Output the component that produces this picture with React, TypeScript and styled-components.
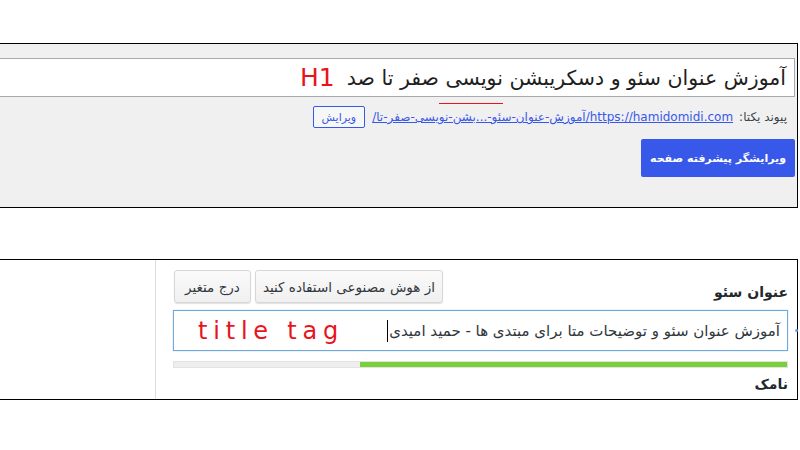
import React from 'react';
import styled, { createGlobalStyle } from 'styled-components';

const GlobalStyle = createGlobalStyle`
  html, body {
    margin: 0;
    padding: 0;
    background: #fff;
  }
  body {
    font-family: "DejaVu Sans", "Noto Sans", sans-serif;
    color: #1e1e1e;
  }
`;

const Page = styled.div`
  width: 800px;
  height: 450px;
  padding-top: 43px;
  box-sizing: border-box;
  overflow: hidden;
  direction: rtl;
`;

const TopPanel = styled.section`
  margin-right: 2px;
  height: 165px;
  box-sizing: border-box;
  border: 1px solid #000;
  border-left: none;
  background: #f0f0f1;
  padding: 14px 2px 0 0;
  display: flex;
  flex-direction: column;
`;

const TitleBox = styled.div`
  height: 39px;
  box-sizing: border-box;
  border: 1px solid #a7aaad;
  border-left: none;
  background: #fff;
  display: flex;
  align-items: center;
  gap: 12px;
  padding-right: 8px;
`;

const TitleText = styled.span`
  font-size: 20.5px;
  color: #1e1e1e;
  white-space: nowrap;
`;

const RedNote = styled.span<{ $size: number; $spacing?: number }>`
  color: #e8141b;
  font-family: "DejaVu Sans", sans-serif;
  font-size: ${({ $size }) => $size}px;
  letter-spacing: ${({ $spacing = 0 }) => $spacing}px;
  direction: ltr;
  white-space: nowrap;
`;

const PermalinkRow = styled.div`
  position: relative;
  display: flex;
  align-items: center;
  gap: 6px;
  margin-top: 9px;
  padding-right: 8px;
  font-size: 12px;
  height: 22px;
`;

const Label = styled.span`
  color: #3c434a;
  white-space: nowrap;
`;

const Link = styled.a`
  color: #3858e9;
  text-decoration: underline;
  white-space: nowrap;
  font-size: 12px;
`;

const UnderMark = styled.span`
  position: absolute;
  top: -3px;
  right: 292px;
  width: 64px;
  height: 1px;
  background: #e8141b;
`;

const SmallButton = styled.button`
  font-family: inherit;
  font-size: 11px;
  color: #3858e9;
  background: #f6f7f7;
  border: 1px solid #3858e9;
  border-radius: 2px;
  height: 22px;
  padding: 0 8px;
  margin-right: 1px;
  cursor: pointer;
`;

const PrimaryButton = styled.button`
  align-self: flex-start;
  margin-top: 11px;
  width: 154px;
  height: 38px;
  padding: 0;
  background: #3858e9;
  color: #fff;
  border: none;
  border-radius: 2px;
  font-family: inherit;
  font-size: 11px;
  font-weight: 700;
  white-space: nowrap;
  cursor: pointer;
`;

const BottomPanel = styled.section`
  margin-top: 51px;
  margin-right: 2px;
  height: 141px;
  box-sizing: border-box;
  border: 1px solid #000;
  border-left: none;
  background: #fff;
  display: grid;
  grid-template-columns: 1fr 156px;
`;

const FieldColumn = styled.div`
  position: relative;
  padding: 10px 9px 0 17px;
  display: flex;
  flex-direction: column;
`;

const SideColumn = styled.div`
  border-right: 1px solid #dcdcde;
`;

const FieldHeader = styled.div`
  display: flex;
  justify-content: space-between;
  align-items: center;
  height: 33px;
`;

const FieldLabel = styled.span<{ $top?: number }>`
  font-size: 14px;
  font-weight: 600;
  color: #23282d;
  margin-top: ${({ $top = 0 }) => $top}px;
`;

const ButtonGroup = styled.div`
  display: flex;
  gap: 4px;
  margin-left: 1px;
`;

const GrayButton = styled.button<{ $pad: number }>`
  height: 33px;
  padding: 0 ${({ $pad }) => $pad}px;
  font-family: inherit;
  font-size: 13.5px;
  color: #32373c;
  background: linear-gradient(#fafafa, #f0f0f0);
  border: 1px solid #d6d6d6;
  border-radius: 3px;
  box-shadow: 0 1px 1px rgba(0, 0, 0, 0.12);
  cursor: pointer;
`;

const InputBox = styled.div`
  margin-top: 7px;
  height: 41px;
  box-sizing: border-box;
  border: 1px solid #6fa8dc;
  background: #fff;
  display: flex;
  justify-content: space-between;
  align-items: center;
  padding: 0 7px 0 24px;
  box-shadow: 0 0 1px rgba(30, 140, 190, 0.5);
`;

const InputValue = styled.span`
  display: flex;
  align-items: center;
  font-size: 15px;
  color: #32373c;
  white-space: nowrap;
`;

const Caret = styled.span`
  display: inline-block;
  width: 1px;
  height: 22px;
  background: #000;
  margin-right: 1px;
`;

const Dot = styled.span`
  position: absolute;
  right: -1px;
  top: 69px;
  width: 3px;
  height: 3px;
  border-radius: 50%;
  background: #6fa8dc;
`;

const Meter = styled.div`
  margin-top: 10px;
  height: 7px;
  box-sizing: border-box;
  background: #eee;
  border: 1px solid #e2e2e2;
  display: flex;
`;

const MeterFill = styled.div`
  background: #7ad03a;
  height: 100%;
`;

export default function App() {
  const score = 0.696;
  return (
    <>
      <GlobalStyle />
      <Page>
        <TopPanel>
          <TitleBox>
            <TitleText>آموزش عنوان سئو و دسکریبشن نویسی صفر تا صد</TitleText>
            <RedNote $size={25}>H1</RedNote>
          </TitleBox>
          <PermalinkRow>
            <Label>پیوند یکتا:</Label>
            <Link href="#">
              https://hamidomidi.com/آموزش-عنوان-سئو-...بشن-نویسی-صفر-تا/
            </Link>
            <SmallButton>ویرایش</SmallButton>
            <UnderMark />
          </PermalinkRow>
          <PrimaryButton>ویرایشگر پیشرفته صفحه</PrimaryButton>
        </TopPanel>

        <BottomPanel>
          <FieldColumn>
            <FieldHeader>
              <FieldLabel $top={10}>عنوان سئو</FieldLabel>
              <ButtonGroup>
                <GrayButton $pad={7}>از هوش مصنوعی استفاده کنید</GrayButton>
                <GrayButton $pad={10}>درج متغیر</GrayButton>
              </ButtonGroup>
            </FieldHeader>
            <InputBox>
              <InputValue>
                آموزش عنوان سئو و توضیحات متا برای مبتدی ها - حمید امیدی
                <Caret />
              </InputValue>
              <RedNote $size={24} $spacing={5.8}>title tag</RedNote>
            </InputBox>
            <Dot />
            <Meter>
              <MeterFill style={{ width: `${score * 100}%` }} />
            </Meter>
            <FieldLabel $top={8}>نامک</FieldLabel>
          </FieldColumn>
          <SideColumn />
        </BottomPanel>
      </Page>
    </>
  );
}
